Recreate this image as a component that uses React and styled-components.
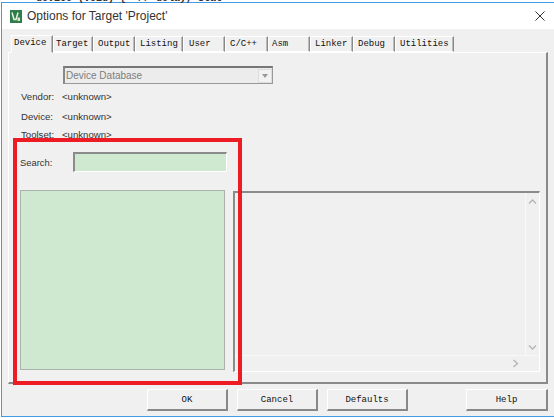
import React from 'react';
import styled, { createGlobalStyle } from 'styled-components';

const GlobalStyle = createGlobalStyle`
    html, body {
        margin: 0;
        padding: 0;
        background: #fff;
    }
`;

const Page = styled.div`
    position: relative;
    width: 554px;
    height: 418px;
    overflow: hidden;
    background: #fff;
    padding: 2px 0 0 1px;
    box-sizing: border-box;
`;

const Dialog = styled.div`
    width: 553px;
    height: 415px;
    box-sizing: border-box;
    border: 1px solid #3f9be6;
    border-right: 0;
    background: #f0f0f0;
    display: flex;
    flex-flow: column;
`;

const TitleBar = styled.div`
    height: 26px;
    background: #fff;
    display: flex;
    align-items: center;
    padding: 0 9px 0 8px;
    column-gap: 5px;
    flex-shrink: 0;
`;

const TitleText = styled.span`
    flex: 1;
    font: 12px "Liberation Sans", Arial, sans-serif;
    color: #333;
`;

const Body = styled.div`
    flex: 1;
    display: flex;
    flex-flow: column;
    padding: 7px 6px 0 6px;
`;

const TabRow = styled.div`
    display: flex;
    padding-left: 3px;
    height: 16px;
    position: relative;
    z-index: 1;
`;

const Tab = styled.div`
    width: ${props => props.$width}px;
    box-sizing: border-box;
    border-top: 1px solid #fff;
    border-left: 1px solid #fff;
    border-right: 1px solid #888;
    box-shadow: inset -1px 0 0 #bbb;
    font: 9px/15px "Liberation Mono", monospace;
    color: #111;
    padding-left: ${props => props.$pad}px;
    white-space: pre;
    border-bottom: ${props => props.$active ? '1px solid #f0f0f0' : '1px solid #fff'};
    margin-top: ${props => props.$active ? -1 : 0}px;
    height: ${props => props.$active ? 18 : 16}px;
`;

const TabPanel = styled.div`
    height: 332px;
    box-sizing: border-box;
    border-top: 1px solid #fff;
    border-left: 1px solid #fff;
    border-right: 2px solid #8a8a8a;
    border-bottom: 2px solid #8a8a8a;
    padding: 13px 5px 0 11px;
    display: flex;
    flex-flow: column;
`;

const DatabaseRow = styled.div`
    padding-left: 43px;
    margin-bottom: 2px;
`;

const Combo = styled.div`
    width: 210px;
    height: 18px;
    box-sizing: border-box;
    border: 1px solid #999;
    border-top: 2px solid #777;
    border-left: 2px solid #888;
    background: #ececec;
    display: flex;
    align-items: center;
    justify-content: space-between;
    font: 10px/14px "Liberation Sans", Arial, sans-serif;
    color: #7c7c7c;
    padding-left: 1px;
`;

const ComboLabel = styled.span`
    padding-top: 1px;
`;

const ComboArrow = styled.div`
    width: 14px;
    height: 14px;
    box-sizing: border-box;
    border: 1px solid #ddd;
    background: #f2f2f2;
    display: flex;
    align-items: center;
    justify-content: center;

    &::after {
        content: '';
        border-left: 3.5px solid transparent;
        border-right: 3.5px solid transparent;
        border-top: 4px solid #999;
    }
`;

const InfoRow = styled.div`
    display: flex;
    height: ${props => props.$height}px;
    align-items: center;
    font: 9.6px "Liberation Sans", Arial, sans-serif;
    color: #333;
`;

const InfoLabel = styled.span`
    width: 42px;
    box-sizing: border-box;
    padding-left: 1px;
    text-align: left;
`;

const SearchRow = styled.div`
    display: flex;
    align-items: center;
    height: 20px;
    margin-top: 9px;
    font: 9.4px "Liberation Sans", Arial, sans-serif;
    color: #333;
`;

const SearchLabel = styled.span`
    width: 53px;
`;

const SearchInput = styled.div`
    width: 154px;
    height: 20px;
    box-sizing: border-box;
    background: #cfe8d0;
    border-top: 2px solid #8b8b8b;
    border-left: 2px solid #8b8b8b;
    border-right: 1px solid #fff;
    border-bottom: 1px solid #fff;
`;

const Lists = styled.div`
    display: flex;
    margin-top: 18px;
    column-gap: 8px;
`;

const DeviceList = styled.div`
    width: 205px;
    height: 180px;
    box-sizing: border-box;
    background: #cfe8d0;
    border: 1px solid #a9b3aa;
`;

const DescriptionBox = styled.div`
    width: 307px;
    height: 181px;
    margin-top: 1px;
    box-sizing: border-box;
    border-top: 2px solid #8b8b8b;
    border-left: 2px solid #8b8b8b;
    border-right: 1px solid #fff;
    border-bottom: 1px solid #fff;
    display: grid;
    grid-template-columns: 1fr 14px;
    grid-template-rows: 1fr 16px;
`;

const VerticalScroll = styled.div`
    display: flex;
    flex-flow: column;
    justify-content: space-between;
    align-items: center;
    border-left: 1px solid #f8f8f8;
    padding: 5px 0 4px;
`;

const HorizontalScroll = styled.div`
    grid-column: 1 / 3;
    display: flex;
    justify-content: flex-end;
    align-items: center;
    border-top: 1px solid #f8f8f8;
    padding-right: 20px;
`;

const ButtonRow = styled.div`
    display: flex;
    padding: 5px 0 0 139px;
`;

const Button = styled.div`
    width: ${props => props.$width}px;
    height: 22px;
    margin-left: ${props => props.$gap}px;
    box-sizing: border-box;
    border-top: 1px solid #fff;
    border-left: 1px solid #fff;
    border-right: 2px solid #888;
    border-bottom: 2px solid #888;
    display: flex;
    align-items: center;
    justify-content: center;
    font: 9px "Liberation Mono", monospace;
    color: #111;
`;

const RedFrame = styled.div`
    position: absolute;
    left: 13px;
    top: 138px;
    width: 229px;
    height: 247px;
    box-sizing: border-box;
    border: 4px solid #ed1c24;
`;

const ClippedCode = styled.div`
    position: absolute;
    left: 24px;
    top: -7px;
    font: bold 10px "Liberation Mono", monospace;
    color: #333;
    white-space: pre;
`;

const tabs = [
    { label: 'Device', width: 42, pad: 2, active: true },
    { label: 'Target', width: 40, pad: 2 },
    { label: 'Output', width: 42, pad: 4 },
    { label: 'Listing', width: 48, pad: 4 },
    { label: 'User', width: 42, pad: 5 },
    { label: 'C/C++', width: 43, pad: 4 },
    { label: 'Asm', width: 42, pad: 3 },
    { label: 'Linker', width: 43, pad: 4 },
    { label: 'Debug', width: 42, pad: 4 },
    { label: 'Utilities', width: 59, pad: 4 },
];

const AppIcon = () => (
    <svg width="12" height="13" viewBox="0 0 12 13">
        <rect width="12" height="13" fill="#2f7d4a" />
        <path d="M2 2.5 L4 9.5 L6 9.5 L8 2.5" fill="none" stroke="#e6f2e6" strokeWidth="1.5" />
        <rect x="7.5" y="7.5" width="2.5" height="3.5" fill="#d9e8c9" />
    </svg>
);

const CloseIcon = () => (
    <svg width="10" height="10" viewBox="0 0 10 10">
        <path d="M0.5 0.5 L9.5 9.5 M9.5 0.5 L0.5 9.5" stroke="#333" strokeWidth="1" fill="none" />
    </svg>
);

const Chevron = ({ points }) => (
    <svg width="9" height="7" viewBox="0 0 9 7">
        <polyline points={points} fill="none" stroke="#b4b4b4" strokeWidth="1.3" />
    </svg>
);

function App() {
    return (
        <Page>
            <GlobalStyle />
            <ClippedCode>  device (void) { '{' }  // delay, Stat</ClippedCode>
            <Dialog>
                <TitleBar>
                    <AppIcon />
                    <TitleText>Options for Target 'Project'</TitleText>
                    <CloseIcon />
                </TitleBar>
                <Body>
                    <TabRow>
                        {tabs.map(tab => (
                            <Tab key={tab.label} $width={tab.width} $pad={tab.pad} $active={tab.active}>{tab.label}</Tab>
                        ))}
                    </TabRow>
                    <TabPanel>
                        <DatabaseRow>
                            <Combo>
                                <ComboLabel>Device Database</ComboLabel>
                                <ComboArrow />
                            </Combo>
                        </DatabaseRow>
                        <InfoRow $height={20}><InfoLabel>Vendor:</InfoLabel>&lt;unknown&gt;</InfoRow>
                        <InfoRow $height={20}><InfoLabel>Device:</InfoLabel>&lt;unknown&gt;</InfoRow>
                        <InfoRow $height={17}><InfoLabel>Toolset:</InfoLabel>&lt;unknown&gt;</InfoRow>
                        <SearchRow>
                            <SearchLabel>Search:</SearchLabel>
                            <SearchInput />
                        </SearchRow>
                        <Lists>
                            <DeviceList />
                            <DescriptionBox>
                                <div />
                                <VerticalScroll>
                                    <Chevron points="1,5.5 4.5,2 8,5.5" />
                                    <Chevron points="1,1.5 4.5,5 8,1.5" />
                                </VerticalScroll>
                                <HorizontalScroll>
                                    <svg width="7" height="9" viewBox="0 0 7 9">
                                        <polyline points="1.5,1 5.5,4.5 1.5,8" fill="none" stroke="#b4b4b4" strokeWidth="1.3" />
                                    </svg>
                                </HorizontalScroll>
                            </DescriptionBox>
                        </Lists>
                    </TabPanel>
                    <ButtonRow>
                        <Button $width={81} $gap={0}>OK</Button>
                        <Button $width={81} $gap={9}>Cancel</Button>
                        <Button $width={81} $gap={9}>Defaults</Button>
                        <Button $width={82} $gap={58}>Help</Button>
                    </ButtonRow>
                </Body>
            </Dialog>
            <RedFrame />
        </Page>
    );
}

export default App;
